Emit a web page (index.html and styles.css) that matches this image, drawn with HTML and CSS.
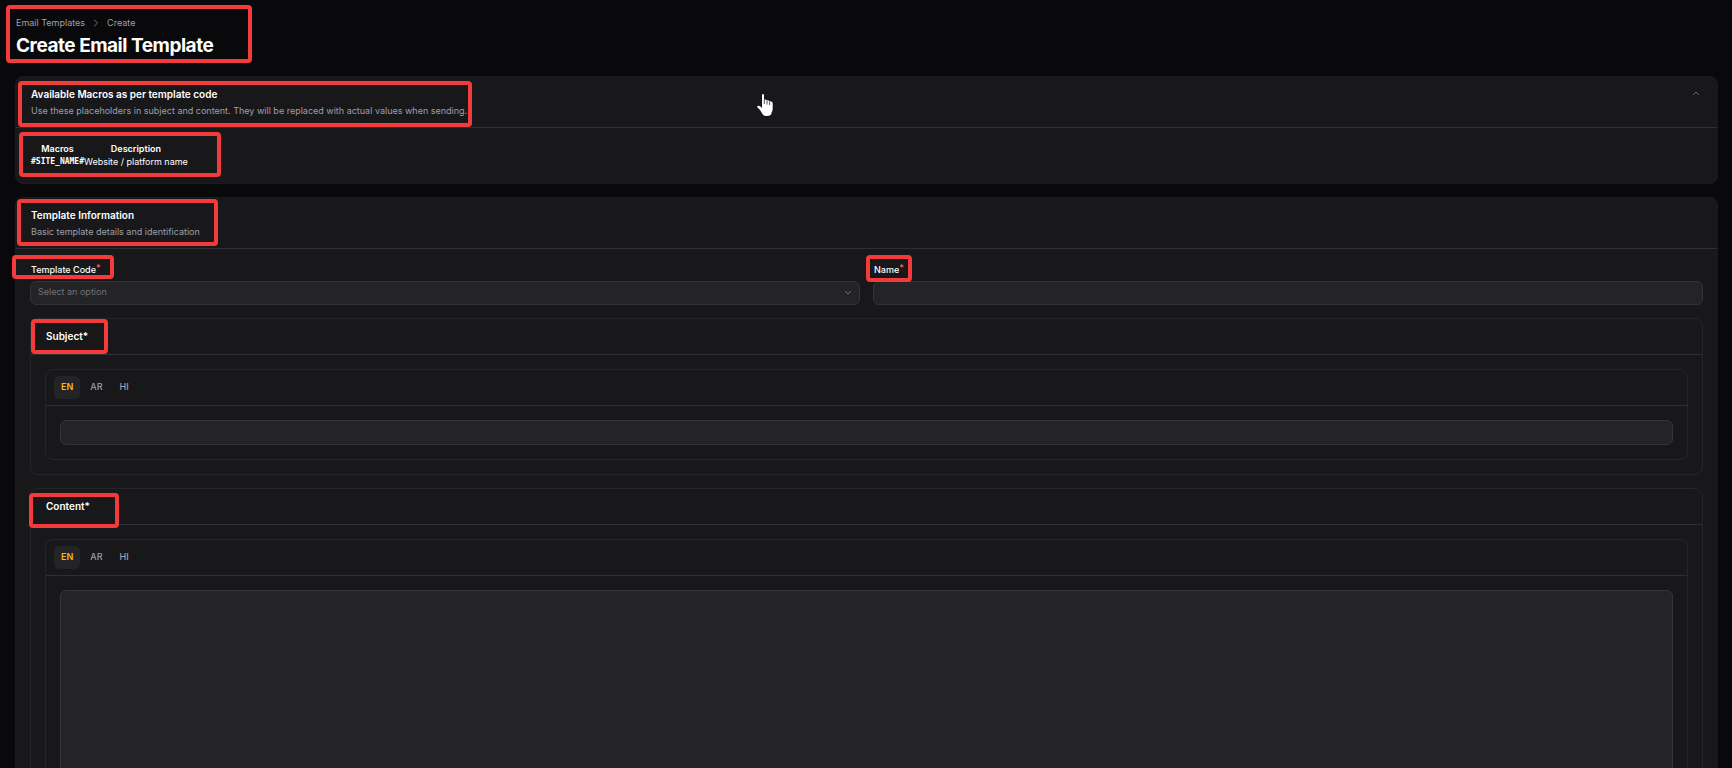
FILE: index.html
```html
<!DOCTYPE html>
<html lang="en">
<head>
  <meta charset="UTF-8">
  <meta name="viewport" content="width=device-width, initial-scale=1.0">
  <title>Create Email Template</title>
  <link rel="stylesheet" href="styles.css">
</head>
<body>

  <main class="page">
    <header class="page-header">
      <nav class="breadcrumbs" aria-label="Breadcrumb">
        <a href="#">Email Templates</a>
        <svg class="icon" viewBox="0 0 8 8"><path d="M2.5 1 5.5 4 2.5 7"/></svg>
        <a href="#">Create</a>
      </nav>
      <h1>Create Email Template</h1>
    </header>

    <!-- Macros -->
    <section class="card">
      <div class="card-header">
        <div>
          <h2>Available Macros as per template code</h2>
          <p>Use these placeholders in subject and content. They will be replaced with actual values when sending.</p>
        </div>
        <button type="button" class="collapse" aria-label="Collapse">
          <svg class="icon" viewBox="0 0 8 8"><path d="M1.5 5.5 4 3 6.5 5.5"/></svg>
        </button>
      </div>
      <div class="macros">
        <table>
          <thead>
            <tr><th>Macros</th><th>Description</th></tr>
          </thead>
          <tbody>
            <tr><td><code>#SITE_NAME#</code></td><td>Website / platform name</td></tr>
          </tbody>
        </table>
      </div>
    </section>

    <!-- Template information -->
    <section class="card">
      <div class="card-header">
        <div>
          <h2>Template Information</h2>
          <p>Basic template details and identification</p>
        </div>
      </div>
      <div class="card-body">
        <div class="field-row">
          <div class="field">
            <label for="code">Template Code<sup>*</sup></label>
            <div class="select-wrap">
              <select id="code">
                <option>Select an option</option>
              </select>
              <svg class="icon" viewBox="0 0 8 8"><path d="M1.5 2.5 4 5 6.5 2.5"/></svg>
            </div>
          </div>
          <div class="field">
            <label for="name">Name<sup>*</sup></label>
            <input type="text" id="name">
          </div>
        </div>

        <section class="panel">
          <h3>Subject*</h3>
          <div class="panel-body">
            <div class="tabs-box">
              <div class="tabs">
                <button type="button" class="tab active">EN</button>
                <button type="button" class="tab">AR</button>
                <button type="button" class="tab">HI</button>
              </div>
              <div class="panel-body">
                <input type="text" class="subject" aria-label="Subject">
              </div>
            </div>
          </div>
        </section>

        <section class="panel">
          <h3>Content*</h3>
          <div class="panel-body">
            <div class="tabs-box">
              <div class="tabs">
                <button type="button" class="tab active">EN</button>
                <button type="button" class="tab">AR</button>
                <button type="button" class="tab">HI</button>
              </div>
              <div class="panel-body">
                <textarea rows="24" aria-label="Content"></textarea>
              </div>
            </div>
          </div>
        </section>
      </div>
    </section>

    <!-- Highlight boxes -->
    <div class="mark mark-title"></div>
    <div class="mark mark-macros"></div>
    <div class="mark mark-table"></div>
    <div class="mark mark-info"></div>
    <div class="mark mark-code"></div>
    <div class="mark mark-name"></div>
    <div class="mark mark-subject"></div>
    <div class="mark mark-content"></div>

    <svg class="pointer" viewBox="0 0 18 24">
      <path d="M6 2.2Q6 1 7 1T8 2.2V7.5Q8.2 6.3 9.4 6.4T10.7 7.6V8Q11 7 12.1 7.2T13.3 8.4V9Q13.6 8 14.8 8.2T16.7 10V16Q16.7 18 15.5 19.5V21Q14.5 23 11 23T6.8 21.5L4 17 1.3 14.2Q.8 13 2 12.7T4.5 13.6L6 15Z"/>
      <path class="gaps" d="M8.3 7v4M11 8v3.5M13.6 9v3"/>
    </svg>
  </main>

</body>
</html>
```

FILE: styles.css
```css
* {
  box-sizing: border-box;
}
body {
  margin: 0;
  background: #09090b;
  color: #fff;
  font-family: Inter, "Liberation Sans", sans-serif;
  font-size: 9px;
  line-height: 14px;
}
h1, h2, h3, p {
  margin: 0;
}
input, select, textarea, button {
  font: inherit;
  color: inherit;
}
.page {
  position: relative;
  height: 100vh;
  overflow-y: auto;
  scrollbar-width: none;
  padding: 16px 14px 16px 15px;
}
.icon {
  width: 8px;
  height: 8px;
  fill: none;
  stroke: #71717b;
  stroke-width: 1;
  stroke-linecap: round;
  stroke-linejoin: round;
}
.page-header {
  padding: 0 1px;
  margin-bottom: 19px;
}
.breadcrumbs {
  display: flex;
  align-items: center;
  gap: 7px;
}
.breadcrumbs a {
  color: #9f9fa9;
  text-decoration: none;
}
h1 {
  margin-top: 4px;
  font-size: 19px;
  line-height: 23px;
  font-weight: 700;
  letter-spacing: -0.025em;
}

/* Cards */
.card {
  margin-bottom: 13px;
  background: #18181b;
  border: 1px solid #1b1b1e;
  border-radius: 8px;
}
.card-header {
  display: flex;
  justify-content: space-between;
  align-items: flex-start;
  padding: 10px 15px 9px;
  border-bottom: 1px solid #2f2f32;
}
h2, h3 {
  font-size: 10px;
  line-height: 15px;
  font-weight: 600;
}
.card-header p {
  margin-top: 2px;
  color: #9f9fa9;
}
.collapse {
  display: flex;
  padding: 2px;
  border: 0;
  background: none;
}
.macros {
  padding: 14px 15px 15px;
}
table {
  border-collapse: collapse;
}
th, td {
  padding: 0;
  line-height: 13px;
}
th {
  font-weight: 600;
}
code {
  display: block;
  font-family: "DejaVu Sans Mono", monospace;
  font-size: 8px;
  font-weight: 700;
}
.card-body {
  padding: 14px;
  display: flex;
  flex-direction: column;
  gap: 13px;
}

/* Fields */
.field-row {
  display: grid;
  grid-template-columns: 1fr 1fr;
  gap: 13px;
}
label {
  display: block;
  margin-bottom: 4px;
  padding-left: 1px;
  font-weight: 500;
}
sup {
  color: #ff6467;
  line-height: 0;
  font-size: 9px;
  vertical-align: 2px;
}
input, select, textarea {
  display: block;
  width: 100%;
  height: 24px;
  padding: 0 7px;
  background: #242427;
  border: 1px solid #343437;
  border-radius: 6px;
  outline: none;
}
select {
  appearance: none;
  padding-bottom: 2px;
  color: #71717b;
}
.select-wrap {
  position: relative;
}
.select-wrap .icon {
  position: absolute;
  right: 8px;
  top: 8px;
}
.subject {
  height: 25px;
}
textarea {
  height: auto;
  resize: none;
}

/* Translatable panels */
.panel, .tabs-box {
  border: 1px solid #262629;
  border-radius: 8px;
}
.panel h3 {
  padding: 10px 15px;
  border-bottom: 1px solid #2f2f32;
}
.panel-body {
  padding: 14px;
}
.tabs {
  display: flex;
  gap: 3px;
  padding: 6px 8px;
  border-bottom: 1px solid #2f2f32;
}
.tab {
  height: 23px;
  padding: 0 7px 2px;
  border: 0;
  border-radius: 5px;
  background: none;
  color: #9f9fa9;
  font-weight: 500;
}
.tab.active {
  background: #242427;
  color: #ffb900;
  font-weight: 600;
}

/* Highlight boxes and pointer, drawn over the form */
.mark {
  position: absolute;
  border: 4px solid #f43b3b;
  border-radius: 4px;
  pointer-events: none;
}
.mark-title {
  left: 6px;
  top: 5px;
  width: 246px;
  height: 58px;
}
.mark-macros {
  left: 18px;
  top: 81px;
  width: 454px;
  height: 46px;
}
.mark-table {
  left: 19px;
  top: 132px;
  width: 202px;
  height: 45px;
}
.mark-info {
  left: 17px;
  top: 199px;
  width: 201px;
  height: 47px;
}
.mark-code {
  left: 12px;
  top: 255px;
  width: 102px;
  height: 24px;
}
.mark-name {
  left: 50%;
  top: 255px;
  width: 46px;
  height: 27px;
}
.mark-subject {
  left: 31px;
  top: 319px;
  width: 77px;
  height: 35px;
}
.mark-content {
  left: 29px;
  top: 493px;
  width: 90px;
  height: 35px;
}
.pointer {
  position: absolute;
  left: 756px;
  top: 93px;
  width: 18px;
  height: 24px;
  fill: #fff;
  stroke: #0b0b18;
  stroke-width: 1;
  paint-order: stroke;
}
.pointer .gaps {
  fill: none;
  stroke: #55555f;
}
```
